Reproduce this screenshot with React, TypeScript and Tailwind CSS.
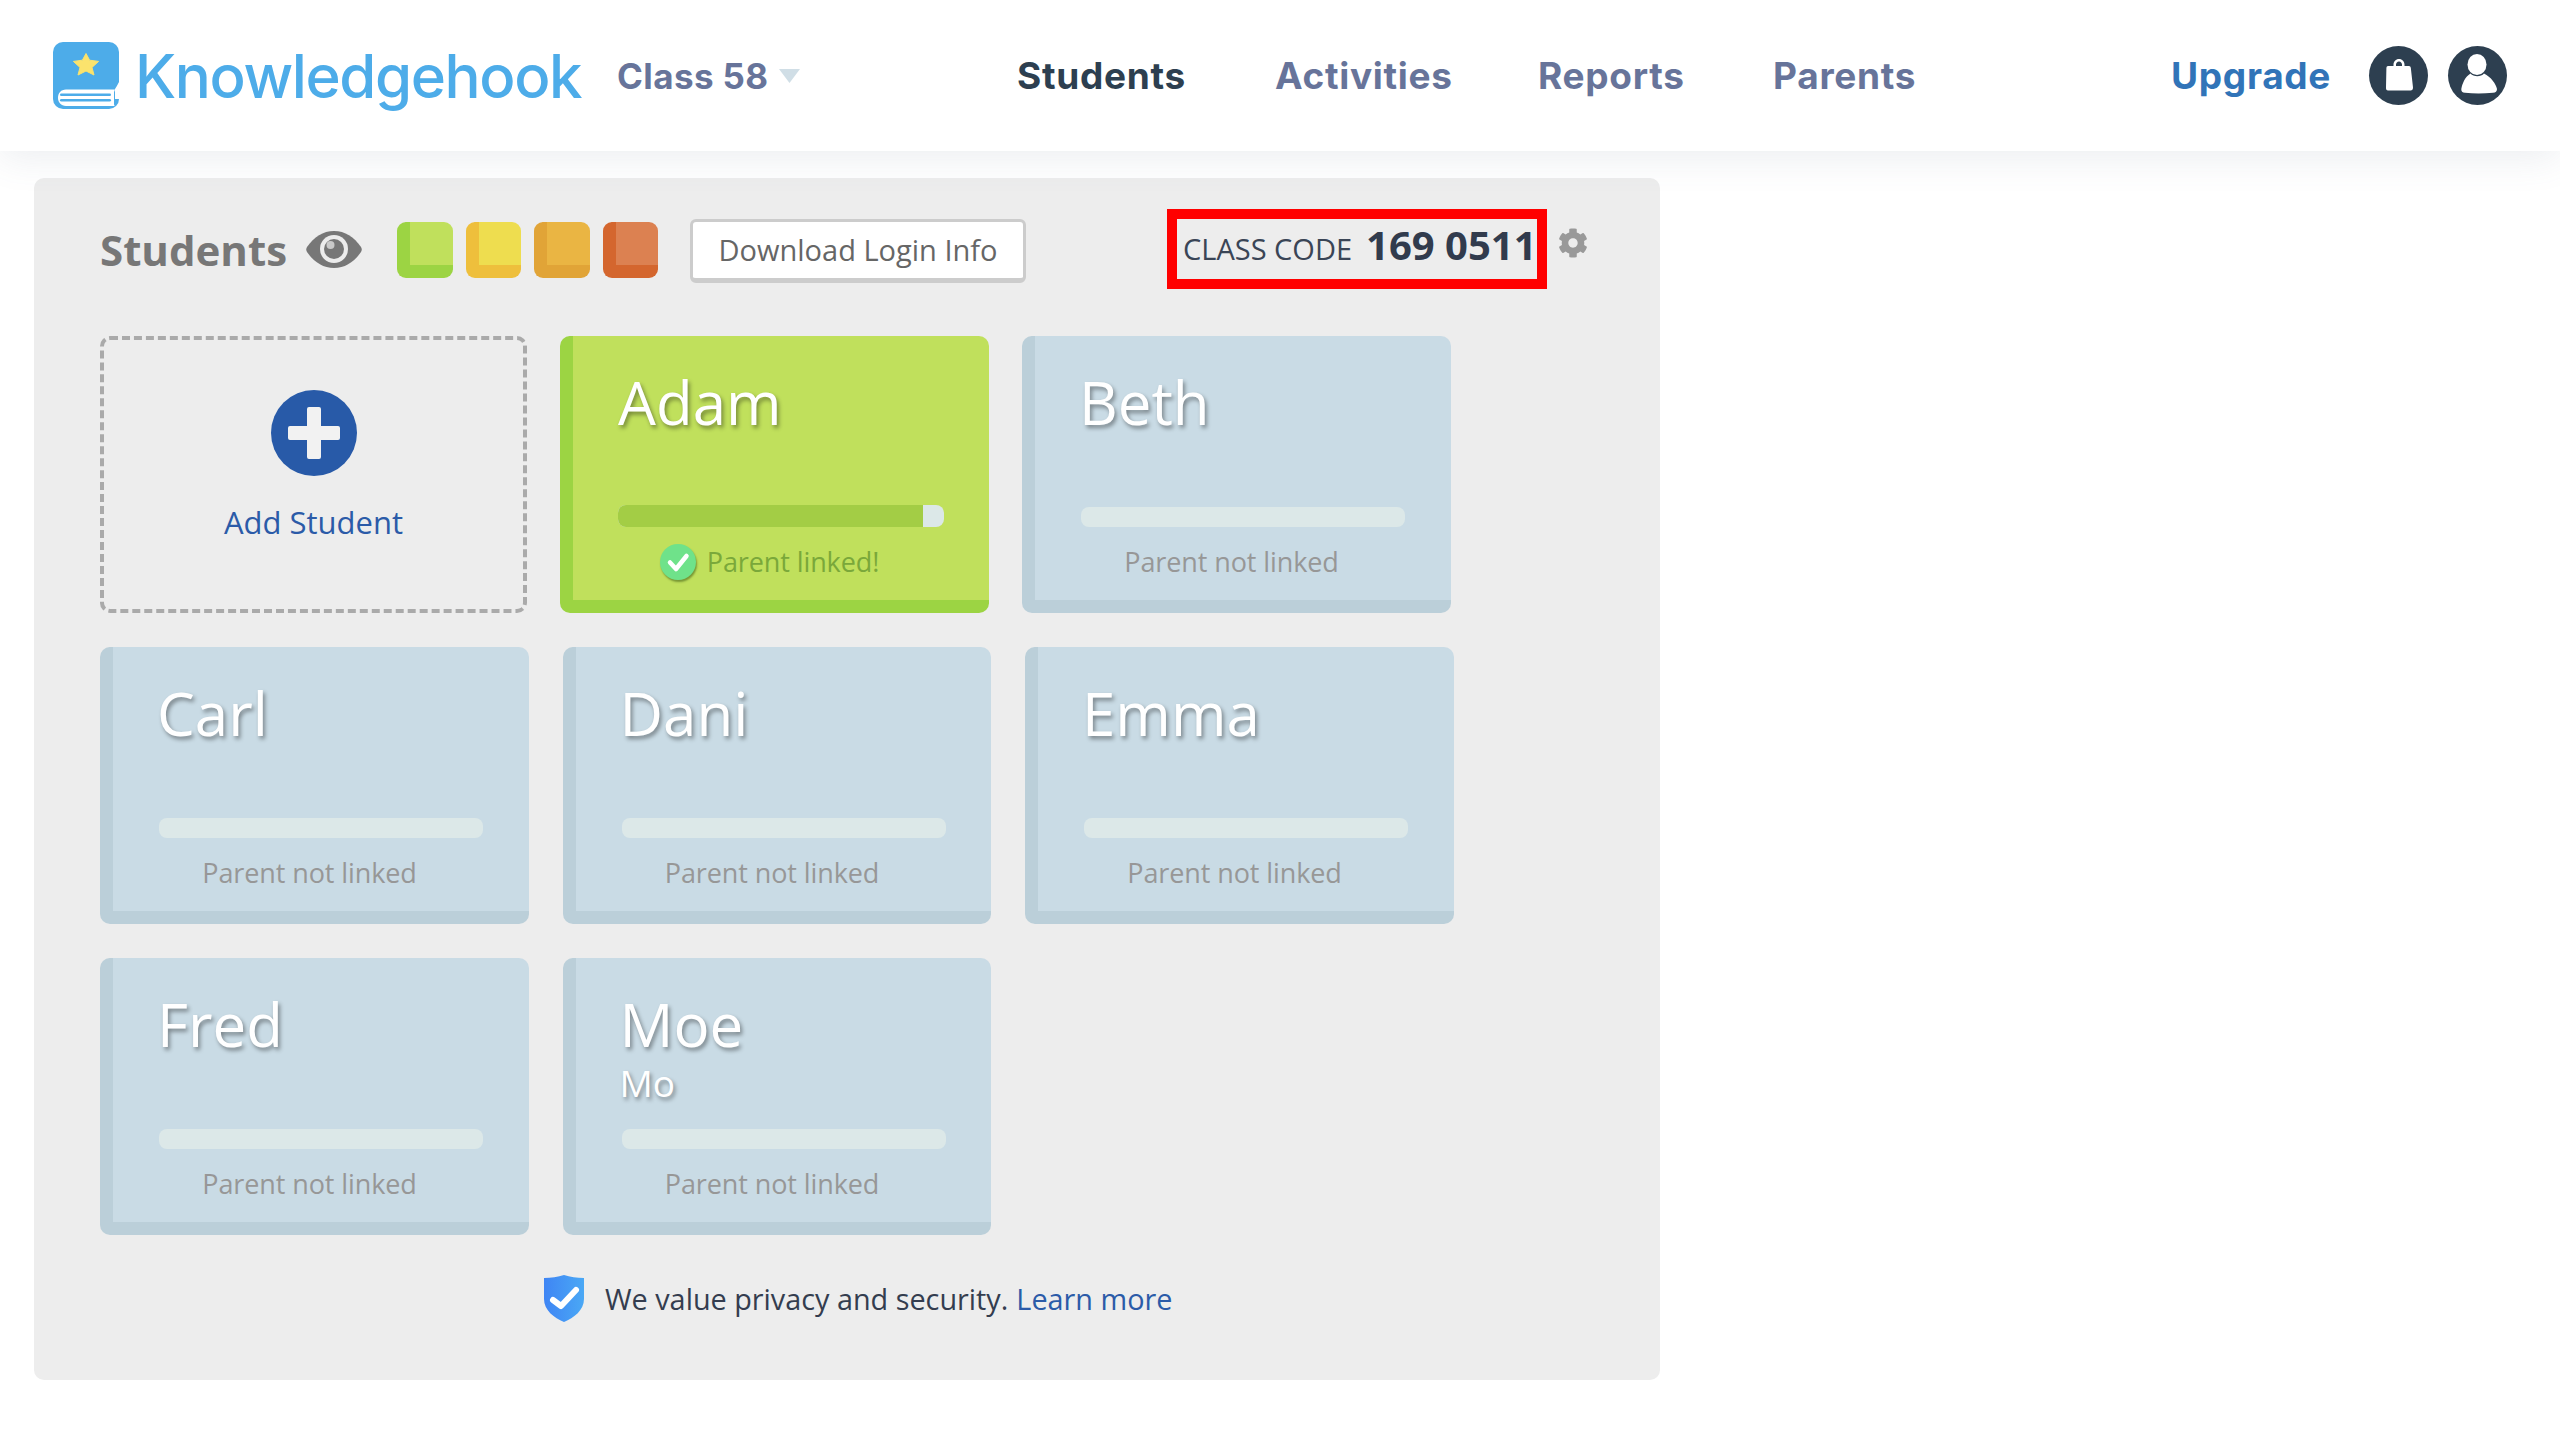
import React from "react";
import { FaCog } from "react-icons/fa";

function BookLogo() {
  return (
    <svg viewBox="0 0 66 67" className="w-[66px] h-[67px] shrink-0">
      <rect x="0" y="0" width="66" height="67" rx="10" fill="#4dace9" />
      <path d="M66 40V57L62 57V47Q64 44 66 40Z" fill="#ffffff" />
      <path d="M13 47.5H62Q61 50 61 50V62Q61 64 62 64H13C8 64 5 60 5 56C5 51 8 47.5 13 47.5Z" fill="#ffffff" />
      <rect x="7" y="51.5" width="51" height="2.6" rx="1.3" fill="#4dace9" />
      <rect x="7" y="57" width="51" height="2.6" rx="1.3" fill="#4dace9" />
      <path d="M33 11.5L36.6 18.2L45.6 19.4L39 25.4L41 33L33 29L25 33L27 25.4L20.4 19.4L29.4 18.2Z" fill="#fbe36d" stroke="#fbe36d" strokeWidth="1" strokeLinejoin="round" />
    </svg>
  );
}

function Bag() {
  return (
    <div className="w-[59px] h-[59px] rounded-full bg-[#2d3f50] flex items-center justify-center">
      <svg viewBox="0 0 59 59" className="w-[59px] h-[59px]">
        <path fillRule="evenodd" d="M19 20H24.5V18.5C24.5 15.5 26.8 13 30 13C33.2 13 35.5 15.5 35.5 18.5V20H40Q41.6 20 41.8 21.8L44 41.5Q44 44.5 41.5 44.5H19Q16.8 44.5 17 41.5L17.4 21.8Q17.5 20 19 20ZM27 20H33V18.5C33 16.8 31.7 15.4 30 15.4C28.3 15.4 27 16.8 27 18.5Z" fill="#ffffff" />
      </svg>
    </div>
  );
}

function UserIcon() {
  return (
    <div className="w-[59px] h-[59px] rounded-full bg-[#2d3f50] flex items-center justify-center">
      <svg viewBox="0 0 59 59" className="w-[59px] h-[59px]">
        <ellipse cx="29" cy="18.5" rx="9.5" ry="10.5" fill="#ffffff" />
        <path d="M22.5 27.5C25.5 31 33 31 36 27.5C43 31 48 38 49 43Q49 46.5 45 46.8Q30 48 17 46.8Q13 46.5 13.3 43C14.5 37 17 31 22.5 27.5Z" fill="#ffffff" />
      </svg>
    </div>
  );
}

function Eye() {
  return (
    <svg viewBox="0 0 56 37" className="w-[56px] h-[37px] shrink-0">
      <path d="M1 16C8 6 17 0 28 0C39 0 48 6 55 16Q56.5 18.5 55 21C48 31 39 37 28 37C17 37 8 31 1 21Q-0.5 18.5 1 16Z" fill="#777777" />
      <circle cx="28" cy="18" r="14" fill="#ececec" />
      <circle cx="28" cy="18" r="10" fill="#777777" />
      <circle cx="24.5" cy="14" r="4" fill="#c9c9c9" />
    </svg>
  );
}

function Swatch({ face, edge }: { face: string; edge: string }) {
  return (
    <div className={`w-[55.5px] h-[56px] rounded-[9px] border-l-[13px] border-b-[13px] ${face} ${edge}`} />
  );
}

function Check() {
  return (
    <div className="w-[36px] h-[36px] rounded-full bg-[#6fe28a] flex items-center justify-center shadow-[1px_2px_2px_rgba(60,90,20,0.55)] shrink-0">
      <svg viewBox="0 0 36 36" className="w-[36px] h-[36px]">
        <path d="M10 18.5L16 25L26.5 12" fill="none" stroke="#ffffff" strokeWidth="4.5" strokeLinecap="round" strokeLinejoin="round" />
      </svg>
    </div>
  );
}

function Card({ name, nick, width }: { name: string; nick?: string; width: string }) {
  return (
    <div className={`h-[277px] rounded-[10px] bg-[#c9dbe5] border-l-[13px] border-b-[13px] border-[#bbcfd9] pl-[45px] pt-[35px] ${width}`}>
      <div className="h-[136px] text-white [text-shadow:2px_3px_4px_rgba(0,0,0,0.4)] font-medium -ml-[1px]">
        <div className="text-[60px] leading-[62px]">{name}</div>
        {nick ? <div className="text-[37px] leading-[38px] mt-[9px]">{nick}</div> : null}
      </div>
      <div className="ml-[1px] w-[324px] h-[20px] rounded-[8px] bg-[#dce8e8]" />
      <div className="w-[303px] mt-[15px] text-center text-[27px] tracking-[-0.1px] leading-[40px] text-[#979797]">Parent not linked</div>
    </div>
  );
}

function AdamCard() {
  return (
    <div className="w-[429px] h-[277px] rounded-[10px] bg-[#c0e05c] border-l-[13px] border-b-[13px] border-[#9cd443] pl-[45px] pt-[35px]">
      <div className="h-[134px] text-white font-medium text-[60px] leading-[62px] [text-shadow:2px_3px_4px_rgba(0,0,0,0.4)]">Adam</div>
      <div className="flex w-[326px] h-[22px] rounded-[8px] overflow-hidden bg-[#dce8e8]">
        <div className="w-[305px] h-full bg-[#a3cd45]" />
      </div>
      <div className="w-[303px] mt-[15px] flex items-center justify-center gap-[11px] text-[27px] tracking-[-0.1px] leading-[40px] text-[#7aa83a]">
        <Check />
        <span>Parent linked!</span>
      </div>
    </div>
  );
}

function AddCard() {
  return (
    <div className="w-[427px] h-[277px] rounded-[10px] border-[4px] border-dashed border-[#aaaaaa] flex flex-col items-center pt-[50px]">
      <svg viewBox="0 0 86 86" className="w-[86px] h-[86px]">
        <circle cx="43" cy="43" r="43" fill="#285aa8" />
        <path d="M36 19Q36 17 38 17H48Q50 17 50 19V36H67Q69 36 69 38V48Q69 50 67 50H50V67Q50 69 48 69H38Q36 69 36 67V50H19Q17 50 17 48V38Q17 36 19 36H36Z" fill="#f2f2f2" />
      </svg>
      <div className="mt-[24px] text-[31px] leading-[44px] text-[#2b5ba8]">Add Student</div>
    </div>
  );
}

function Shield() {
  return (
    <svg viewBox="0 0 40 47" className="w-[40px] h-[47px] shrink-0">
      <defs>
        <linearGradient id="shieldFill" x1="0" y1="0" x2="1" y2="0">
          <stop offset="0" stopColor="#3f85f4" />
          <stop offset="1" stopColor="#4aa8f5" />
        </linearGradient>
      </defs>
      <path d="M20 0C26 2 33 3 40 3V24C40 35 30 43 20 47C10 43 0 35 0 24V3C7 3 14 2 20 0Z" fill="url(#shieldFill)" />
      <path d="M9 25L17 31L32 15" fill="none" stroke="#ffffff" strokeWidth="6" strokeLinecap="round" strokeLinejoin="round" />
    </svg>
  );
}

export default function App() {
  const navFont = "font-['Inter',sans-serif] font-bold text-[37px] tracking-[0.7px] leading-[44px]";
  return (
    <div className="w-[2560px] h-[1440px] bg-white overflow-hidden font-['Open_Sans',sans-serif]">
      <header className="relative z-10 h-[151px] bg-white flex items-center pl-[53px] shadow-[0_6px_36px_rgba(90,105,135,0.12)]">
        <BookLogo />
        <div className="ml-[16px] w-[446px] font-['Inter',sans-serif] font-medium text-[60px] leading-[70px] tracking-[-1.4px] text-[#4dace9] whitespace-nowrap">Knowledgehook</div>
        <div className="ml-[36px] w-[150px] font-['Inter',sans-serif] font-bold text-[35px] tracking-[0.4px] leading-[44px] text-[#67749a] whitespace-nowrap">Class 58</div>
        <svg viewBox="0 0 21 14" className="ml-[12px] w-[21px] h-[14px]">
          <path d="M0 0H21L10.5 14Z" fill="#d0dee6" />
        </svg>
        <div className={`ml-[217px] w-[168px] text-[#2d3f50] ${navFont}`}>Students</div>
        <div className={`ml-[90px] w-[173px] text-[#67749a] ${navFont}`}>Activities</div>
        <div className={`ml-[90px] w-[145px] text-[#67749a] ${navFont}`}>Reports</div>
        <div className={`ml-[90px] w-[144px] text-[#67749a] ${navFont}`}>Parents</div>
        <div className={`ml-[254px] w-[159px] text-[#3174b8] ${navFont}`}>Upgrade</div>
        <div className="ml-[39px]"><Bag /></div>
        <div className="ml-[20px]"><UserIcon /></div>
      </header>

      <main className="relative ml-[34px] mt-[27px] w-[1626px] h-[1202px] rounded-[10px] bg-[#ededed] pl-[66px] pt-[31px]">
        <div className="flex items-center h-[80px]">
          <div className="w-[206px] mt-[2px] text-[42px] leading-[60px] font-bold text-[#777777]">Students</div>
          <Eye />
          <div className="ml-[35px] mt-[1px] flex gap-[13px]">
            <Swatch face="bg-[#c0e05c]" edge="border-[#9cd443]" />
            <Swatch face="bg-[#eedd4f]" edge="border-[#eebf3c]" />
            <Swatch face="bg-[#eab543]" edge="border-[#e1a437]" />
            <Swatch face="bg-[#dc8151]" edge="border-[#d4662e]" />
          </div>
          <div className="ml-[32px] mt-[3px] w-[336px] h-[64px] rounded-[6px] bg-white border-[3px] border-b-[5px] border-[#cccccc] flex items-center justify-center text-[29px] text-[#666666] whitespace-nowrap">Download Login Info</div>
          <div className="ml-[141px] w-[380px] h-[80px] border-[10px] border-[#ff0000] flex items-baseline pl-[6px] pt-[6px] whitespace-nowrap">
            <span className="text-[29px] leading-[40px] text-[#3a4556]">CLASS CODE</span>
            <span className="ml-[14px] text-[40px] leading-[40px] font-bold text-[#313b4d]">169 0511</span>
          </div>
          <FaCog className="ml-[11px] -mt-[12px] w-[30px] h-[30px] text-[#999999]" />
        </div>

        <div className="mt-[47px] flex flex-col gap-[34px]">
          <div className="flex gap-[33px]">
            <AddCard />
            <AdamCard />
            <Card name="Beth" width="w-[429px]" />
          </div>
          <div className="flex gap-[34px]">
            <Card name="Carl" width="w-[428.5px]" />
            <Card name="Dani" width="w-[428.5px]" />
            <Card name="Emma" width="w-[428.5px]" />
          </div>
          <div className="flex gap-[34px]">
            <Card name="Fred" width="w-[428.5px]" />
            <Card name="Moe" nick="Mo" width="w-[428.5px]" />
          </div>
        </div>

        <div className="mt-[40px] ml-[444px] flex items-center h-[47px] text-[28.8px] leading-[44px] text-[#343d4f] whitespace-nowrap">
          <Shield />
          <span className="ml-[21px]">We value privacy and security.</span>
          <span className="ml-[8px] text-[#2b5ba8]">Learn more</span>
        </div>
      </main>
    </div>
  );
}
